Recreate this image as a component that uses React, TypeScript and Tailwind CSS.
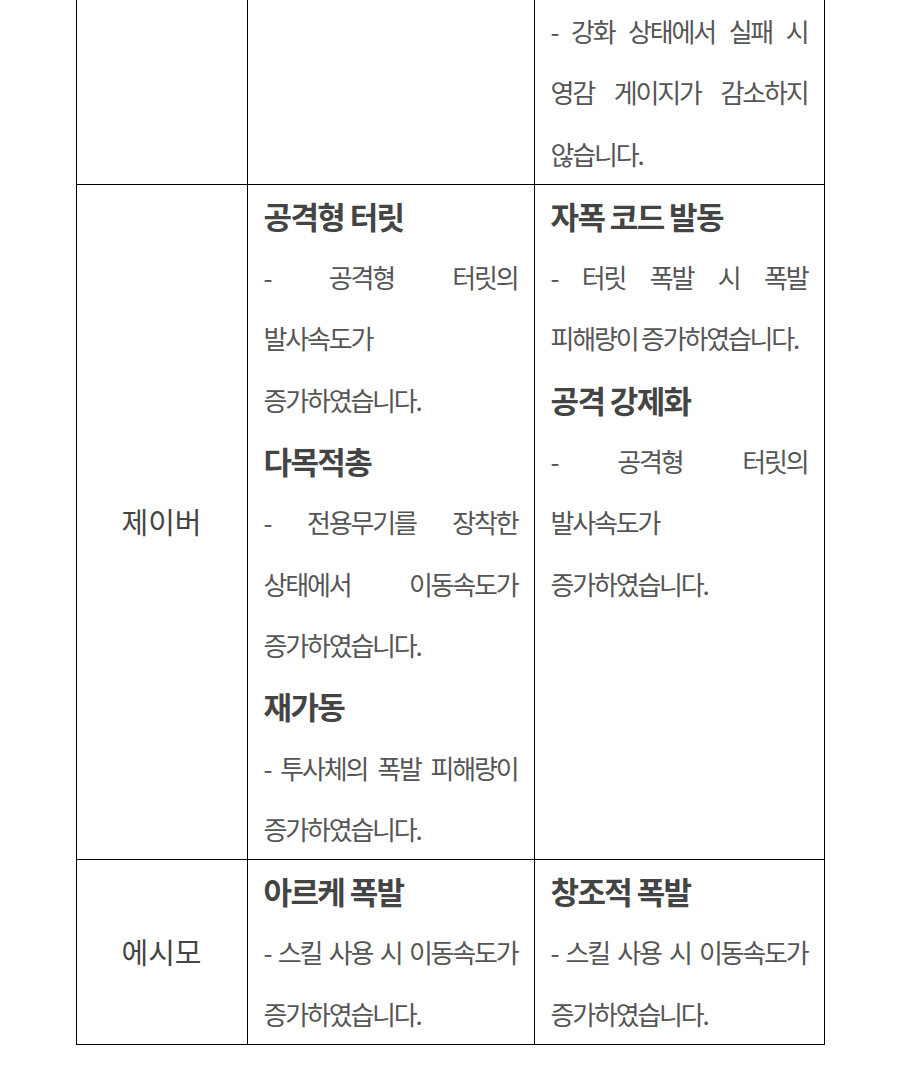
const font = { fontFamily: '"Noto Sans CJK KR", "Noto Sans", sans-serif' };

type Line = { text: string; kind: "head" | "just" | "plain" };

const h = (text: string): Line => ({ text, kind: "head" });
const j = (text: string): Line => ({ text, kind: "just" });
const p = (text: string): Line => ({ text, kind: "plain" });

// 표 내용 (줄 단위로 정리)
const rows: { label: string; mid: Line[]; right: Line[] }[] = [
  {
    label: "",
    mid: [],
    right: [j("- 강화 상태에서 실패 시"), j("영감 게이지가 감소하지"), p("않습니다.")],
  },
  {
    label: "제이버",
    mid: [
      h("공격형 터릿"),
      j("- 공격형 터릿의"),
      p("발사속도가"),
      p("증가하였습니다."),
      h("다목적총"),
      j("- 전용무기를 장착한"),
      j("상태에서 이동속도가"),
      p("증가하였습니다."),
      h("재가동"),
      j("- 투사체의 폭발 피해량이"),
      p("증가하였습니다."),
    ],
    right: [
      h("자폭 코드 발동"),
      j("- 터릿 폭발 시 폭발"),
      p("피해량이 증가하였습니다."),
      h("공격 강제화"),
      j("- 공격형 터릿의"),
      p("발사속도가"),
      p("증가하였습니다."),
    ],
  },
  {
    label: "에시모",
    mid: [h("아르케 폭발"), j("- 스킬 사용 시 이동속도가"), p("증가하였습니다.")],
    right: [h("창조적 폭발"), j("- 스킬 사용 시 이동속도가"), p("증가하였습니다.")],
  },
];

const Cell = ({ lines }: { lines: Line[] }) => (
  <td className="border-[1.5px] border-black px-4 align-top">
    {lines.map((l, i) =>
      l.kind === "head" ? (
        <div
          key={i}
          className="whitespace-nowrap text-[31px] font-bold leading-[61.3px] tracking-[-1.6px] text-[#444]"
        >
          {l.text}
        </div>
      ) : (
        <div
          key={i}
          className={`whitespace-nowrap text-[26px] leading-[61.3px] tracking-[-2.2px] text-[#555] ${
            l.kind === "just" ? "text-justify [text-align-last:justify]" : "text-left"
          }`}
        >
          {l.text}
        </div>
      )
    )}
  </td>
);

export default function App() {
  return (
    <div className="min-h-screen bg-white" style={font}>
      <table className="mx-auto w-[748px] table-fixed border-collapse">
        <colgroup>
          <col className="w-[171px]" />
          <col className="w-[287px]" />
          <col className="w-[290px]" />
        </colgroup>
        <tbody>
          {rows.map((row, i) => (
            <tr key={i} className={i === 0 ? "[&>td]:border-t-0" : ""}>
              <td className="border-[1.5px] border-black text-center align-middle text-[29px] tracking-[0px] text-[#444]">
                {row.label}
              </td>
              <Cell lines={row.mid} />
              <Cell lines={row.right} />
            </tr>
          ))}
        </tbody>
      </table>
    </div>
  );
}
